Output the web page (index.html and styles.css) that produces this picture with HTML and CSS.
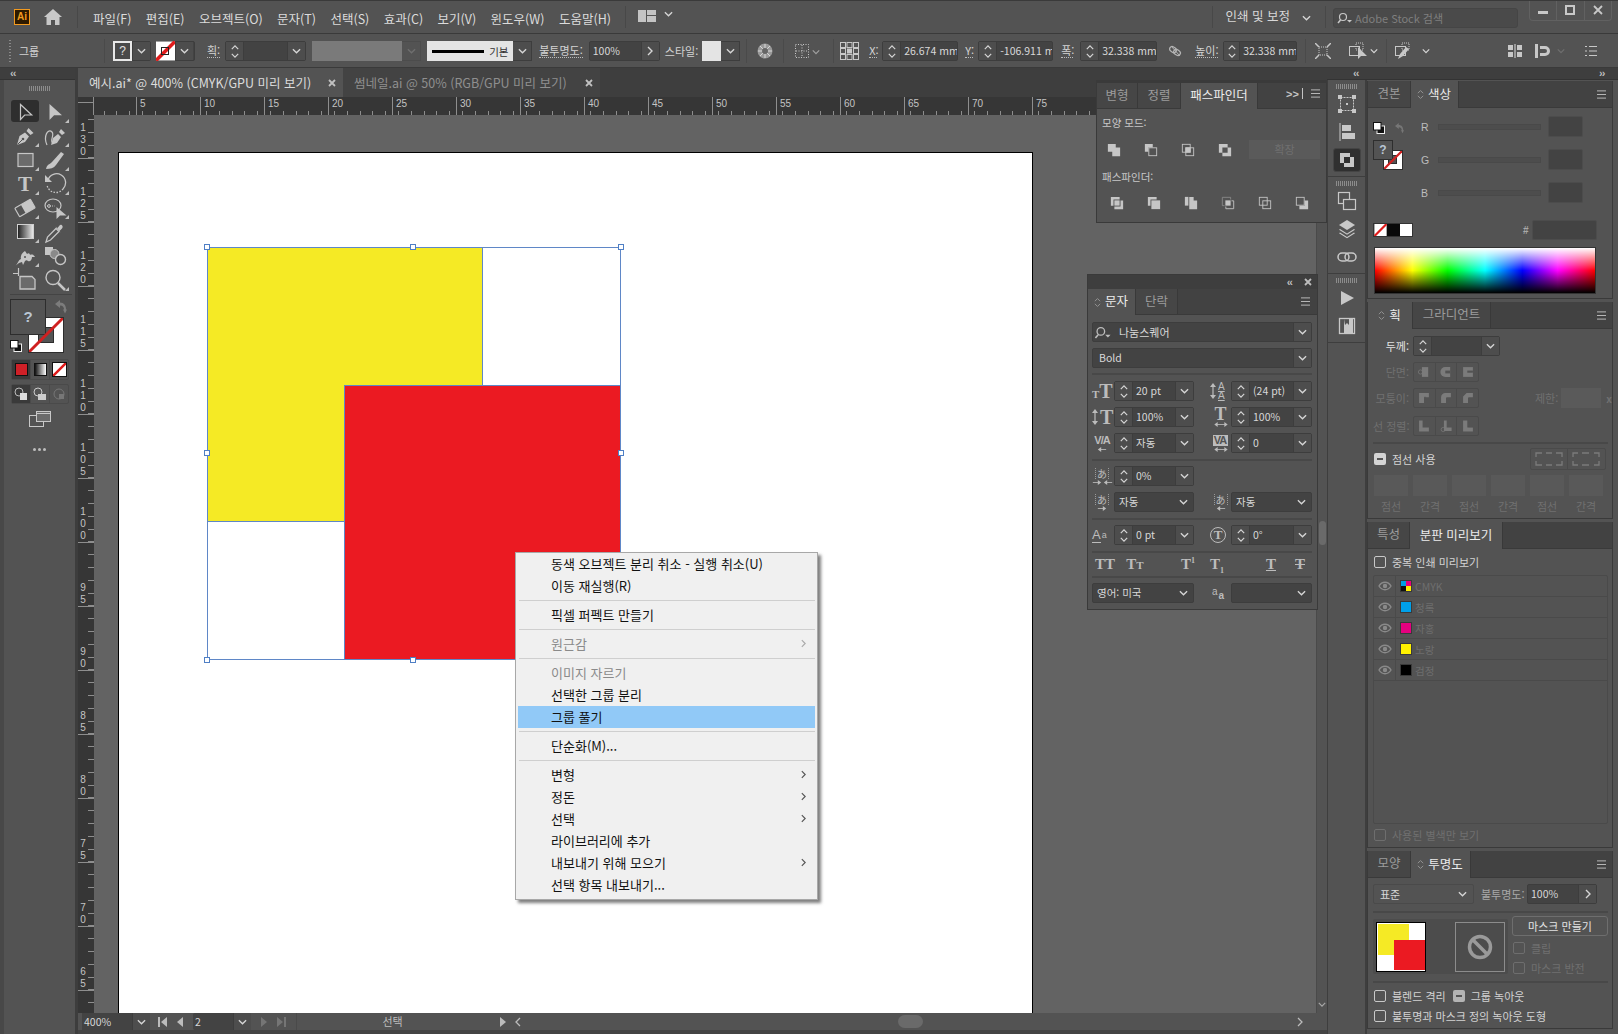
FILE: index.html
```html
<!DOCTYPE html>
<html lang="ko">
<head>
<meta charset="utf-8">
<title>Adobe Illustrator</title>
<link rel="stylesheet" href="styles.css">
</head>
<body>
<svg class="sprite" xmlns="http://www.w3.org/2000/svg">
  <defs>
    <linearGradient id="gr"><stop offset="0" stop-color="#1c1c1c"/><stop offset="1" stop-color="#eee"/></linearGradient>
    <symbol id="down" viewBox="0 0 10 6"><path d="M1 1l4 4 4-4" fill="none" stroke="currentColor" stroke-width="1.5"/></symbol>
    <symbol id="up" viewBox="0 0 10 6"><path d="M1 5l4-4 4 4" fill="none" stroke="currentColor" stroke-width="1.5"/></symbol>
    <symbol id="right" viewBox="0 0 6 10"><path d="M1 1l4 4-4 4" fill="none" stroke="currentColor" stroke-width="1.4"/></symbol>
    <symbol id="updown" viewBox="0 0 8 12"><path d="M1 4.500l3-3 3 3M1 7.500l3 3 3-3" fill="none" stroke="currentColor"/></symbol>
    <symbol id="menu" viewBox="0 0 12 10"><path d="M1 1h10M1 5h10M1 9h10" stroke="currentColor"/></symbol>
    <symbol id="lens" viewBox="0 0 16 12"><circle cx="6" cy="5" r="3.500" fill="none" stroke="currentColor" stroke-width="1.200"/><path d="M3.500 8L1 11" stroke="currentColor" stroke-width="1.500"/><path d="M10 8h5l-2.500 2.500z" fill="currentColor"/></symbol>
    <symbol id="none" viewBox="0 0 16 16"><rect width="16" height="16" fill="#fff"/><path d="M0 16L16 0" stroke="#e01b1b" stroke-width="3"/></symbol>
    <symbol id="eye" viewBox="0 0 14 10"><path d="M1 5c3-5 9-5 12 0-3 5-9 5-12 0z" fill="none" stroke="currentColor" stroke-width="1.400"/><circle cx="7" cy="5" r="2.200" fill="currentColor"/></symbol>
    <symbol id="arr-v" viewBox="0 0 6 16"><path d="M3 2v12" stroke="currentColor" stroke-width="1.200"/><path d="M3 0l3 4H0zM3 16l3-4H0z" fill="currentColor"/></symbol>
    <symbol id="arr-h" viewBox="0 0 16 6"><path d="M2 3h12" stroke="currentColor" stroke-width="1"/><path d="M0 3l4-3v6zM16 3l-4-3v6z" fill="currentColor"/></symbol>
    <symbol id="arr-l" viewBox="0 0 10 6"><path d="M2 3h8" stroke="currentColor"/><path d="M0 3l4-3v6z" fill="currentColor"/></symbol>
    <symbol id="arr-r" viewBox="0 0 10 6"><path d="M0 3h8" stroke="currentColor"/><path d="M10 3L6 0v6z" fill="currentColor"/></symbol>

    <symbol id="t-arrow" viewBox="0 0 24 24"><path d="M7.500 4.500v15l4.200-4.500h7z" fill="none" stroke="currentColor" stroke-width="1.200"/></symbol>
    <symbol id="t-darrow" viewBox="0 0 24 24"><path d="M6.500 4v16l4.600-4.700h7.900z" fill="currentColor"/></symbol>
    <symbol id="t-pen" viewBox="0 0 24 24"><path d="M4 21l2.500-9L12 8.500l4 4-4 5.500zM13.500 7l2-3 5 5-3 2z" fill="currentColor"/><path d="M4.500 20.500l5-5" stroke="#535353"/><circle cx="10" cy="15" r="1.300" fill="#535353"/></symbol>
    <symbol id="t-curve" viewBox="0 0 24 24"><path d="M4 21C0 12 5 4 9 8c3 3-3 9 1 11" fill="none" stroke="currentColor" stroke-width="1.200"/><path d="M8 21l2-7 5-4 3 3-4 6zM16 8l2-3 4 4-3 2z" fill="currentColor"/></symbol>
    <symbol id="t-rect" viewBox="0 0 24 24"><rect x="5" y="5.500" width="15" height="13" fill="#6b6b6b" stroke="currentColor" stroke-width="1.200"/></symbol>
    <symbol id="t-brush" viewBox="0 0 24 24"><path d="M3 21c1-5 3-4 6-7l9-10 3 2-8 11c-2 3-6 4-10 4z" fill="currentColor"/></symbol>
    <symbol id="t-rotate" viewBox="0 0 24 24"><path d="M5 8a9 9 0 1 1 15 9" fill="none" stroke="currentColor" stroke-width="1.300"/><path d="M20 17a9 9 0 0 1-16-4" fill="none" stroke="currentColor" stroke-width="1.300" stroke-dasharray="1.500 1.500"/><path d="M2 3v7h7z" fill="currentColor"/></symbol>
    <symbol id="t-eraser" viewBox="0 0 24 24"><g transform="rotate(-30 12 12)"><rect x="3" y="7" width="18" height="10" rx="1" fill="none" stroke="currentColor" stroke-width="1.200"/><rect x="10" y="7" width="11" height="10" rx="1" fill="currentColor"/></g></symbol>
    <symbol id="t-shape" viewBox="0 0 24 24"><ellipse cx="10" cy="9.500" rx="8" ry="6.500" fill="none" stroke="currentColor" stroke-width="1.200"/><path d="M4 10h8" stroke="currentColor" stroke-dasharray="1 1.500"/><circle cx="6" cy="10" r="1.400" fill="none" stroke="currentColor"/><path d="M13.500 11v12l3.500-3.500h6.500z" fill="currentColor"/></symbol>
    <symbol id="t-grad" viewBox="0 0 24 24"><rect x="4.500" y="4.500" width="16" height="14" fill="url(#gr)" stroke="#d0d0d0"/></symbol>
    <symbol id="t-drop" viewBox="0 0 24 24"><path d="M3 22l1.500-5L13 8.500l3 3L7.500 20z" fill="none" stroke="currentColor" stroke-width="1.300"/><path d="M12.500 6.500l2 1.500 2-2.500c1.500-2 4.500 1 2.500 3L16.500 11l1.500 2z" fill="currentColor"/></symbol>
    <symbol id="t-warp" viewBox="0 0 24 24"><path d="M2 22c3-2 3-6 6-7-1-3 1-6 4-8l2 3c2-2 3 0 3 1 2-1 4 0 5 2l-3 0c0 3-2 5-4 4-1-1-2-1-3 0l-2 4-1-3-3 1z" fill="currentColor"/><circle cx="12" cy="13" r="1" fill="#535353"/></symbol>
    <symbol id="t-blend" viewBox="0 0 24 24"><rect x="2" y="3" width="8" height="8" fill="currentColor"/><circle cx="11.500" cy="10" r="4.500" fill="#8a8a8a" stroke="currentColor"/><circle cx="17.500" cy="15.500" r="5" fill="#535353" stroke="currentColor" stroke-width="1.400"/></symbol>
    <symbol id="t-board" viewBox="0 0 24 24"><path d="M0 5.500h6M5.500 0v8" stroke="currentColor" stroke-width="1.200"/><path d="M7 8.500h12l3 3V21H7z" fill="#6b6b6b" stroke="currentColor" stroke-width="1.300"/></symbol>
    <symbol id="t-zoom" viewBox="0 0 24 24"><circle cx="10" cy="9.500" r="7" fill="none" stroke="currentColor" stroke-width="1.400"/><path d="M15 15l7 7" stroke="currentColor" stroke-width="2.500"/></symbol>

    <symbol id="pf-unite" viewBox="0 0 16 16"><path d="M1 1h9v4h5v10H6v-5H1z" fill="currentColor"/></symbol>
    <symbol id="pf-minus" viewBox="0 0 16 16"><path d="M1 1h9v4H5v5H1z" fill="currentColor"/><rect x="5.500" y="5.500" width="9" height="9" fill="none" stroke="currentColor"/></symbol>
    <symbol id="pf-inter" viewBox="0 0 16 16"><rect x="1.500" y="1.500" width="9" height="9" fill="none" stroke="currentColor"/><rect x="5.500" y="5.500" width="9" height="9" fill="none" stroke="currentColor"/><rect x="5" y="5" width="6" height="6" fill="currentColor"/></symbol>
    <symbol id="pf-excl" viewBox="0 0 16 16"><path d="M1 1h10v4H5v6H1zM11 5h4v10H5v-4h6z" fill="currentColor"/></symbol>
    <symbol id="pf-div" viewBox="0 0 16 16"><path d="M1 1h10v3H4v7H1z" fill="currentColor"/><rect x="5" y="5" width="6" height="6" fill="currentColor"/><path d="M12 5h3v10H5v-3h7z" fill="currentColor"/></symbol>
    <symbol id="pf-trim" viewBox="0 0 16 16"><path d="M1 1h10v3H4v7H1z" fill="currentColor"/><rect x="5" y="5" width="10" height="10" fill="currentColor"/></symbol>
    <symbol id="pf-merge" viewBox="0 0 16 16"><path d="M1 1h4v10H1z" fill="currentColor"/><path d="M6 1h5v4h4v10H6z" fill="currentColor"/></symbol>
    <symbol id="pf-crop" viewBox="0 0 16 16"><path d="M4 11H1.500V1.500H11V4" fill="none" stroke="#8c8c8c"/><path d="M12 5.500h2.500v9H5.500V12" fill="none" stroke="currentColor"/><rect x="5" y="5" width="6" height="6" fill="currentColor"/></symbol>
    <symbol id="pf-out" viewBox="0 0 16 16"><rect x="1.500" y="1.500" width="9" height="9" fill="none" stroke="currentColor"/><rect x="5.500" y="5.500" width="9" height="9" fill="none" stroke="currentColor"/></symbol>
    <symbol id="pf-back" viewBox="0 0 16 16"><path d="M11 5h4v10H5v-4h6z" fill="currentColor"/><rect x="1.500" y="1.500" width="9" height="9" fill="none" stroke="currentColor"/></symbol>

    <symbol id="d-transform" viewBox="0 0 20 20"><rect x="3.500" y="3.500" width="13" height="13" fill="none" stroke="currentColor" stroke-dasharray="2 1"/><rect x="1" y="1" width="4" height="4" fill="currentColor"/><rect x="15" y="1" width="4" height="4" fill="currentColor"/><rect x="1" y="15" width="4" height="4" fill="currentColor"/><rect x="15" y="15" width="4" height="4" fill="currentColor"/><rect x="9" y="9" width="2" height="2" fill="currentColor"/></symbol>
    <symbol id="d-align" viewBox="0 0 20 20"><path d="M3 1v18" stroke="currentColor"/><rect x="5" y="3" width="9" height="6" fill="currentColor"/><rect x="5" y="11" width="13" height="6" fill="currentColor"/></symbol>
    <symbol id="d-two" viewBox="0 0 20 20"><rect x="1.500" y="1.500" width="11" height="11" fill="none" stroke="currentColor" stroke-width="1.200"/><rect x="6.500" y="8.500" width="12" height="10" fill="#535353" stroke="currentColor" stroke-width="1.200"/></symbol>
    <symbol id="d-layers" viewBox="0 0 20 20"><path d="M10 1l8 5-8 5-8-5z" fill="currentColor"/><path d="M3 10l7 4.500L17 10l1 .800-8 5-8-5z" fill="currentColor"/><path d="M3 13.500l7 4.500 7-4.500 1 .800-8 5-8-5z" fill="currentColor"/></symbol>
    <symbol id="d-link" viewBox="0 0 20 12"><rect x="1" y="2" width="11" height="8" rx="4" fill="none" stroke="currentColor" stroke-width="1.500"/><rect x="8" y="2" width="11" height="8" rx="4" fill="none" stroke="currentColor" stroke-width="1.500"/></symbol>
    <symbol id="d-play" viewBox="0 0 20 20"><path d="M4 3l13 7-13 7z" fill="currentColor"/></symbol>
    <symbol id="d-book" viewBox="0 0 20 20"><rect x="2.500" y="2.500" width="15" height="15" fill="none" stroke="currentColor" stroke-width="1.300"/><path d="M7 3v14h9V3h-4v6l-2-2-2 2" fill="currentColor"/></symbol>

    <symbol id="c-cap1" viewBox="0 0 20 20"><circle cx="5" cy="10" r="3" fill="none" stroke="currentColor"/><rect x="7" y="3" width="9" height="14" fill="currentColor"/></symbol>
    <symbol id="c-cap2" viewBox="0 0 20 20"><path d="M16 3H9a7 7 0 0 0 0 14h7z" fill="currentColor"/><rect x="9" y="8" width="7" height="4" fill="#535353"/></symbol>
    <symbol id="c-cap3" viewBox="0 0 20 20"><rect x="3" y="3" width="14" height="14" fill="currentColor"/><rect x="9" y="8" width="8" height="3" fill="#535353"/></symbol>
    <symbol id="c-join1" viewBox="0 0 20 20"><path d="M3 3h14v6h-7v8H3z" fill="currentColor"/><path d="M10 9h3" stroke="#535353"/></symbol>
    <symbol id="c-join2" viewBox="0 0 20 20"><path d="M9 3h8v6h-6l-1 1v7H3V9a6 6 0 0 1 6-6z" fill="currentColor"/></symbol>
    <symbol id="c-join3" viewBox="0 0 20 20"><path d="M8 3h9v6h-6l-1 1v7H3V8z" fill="currentColor"/></symbol>
    <symbol id="c-al1" viewBox="0 0 20 20"><path d="M3 2h5v10h9v6H3z" fill="currentColor"/></symbol>
    <symbol id="c-al2" viewBox="0 0 20 20"><path d="M7 2h4v10h7v5H7z" fill="currentColor"/><circle cx="6" cy="15" r="3" fill="none" stroke="currentColor"/></symbol>
    <symbol id="c-al3" viewBox="0 0 20 20"><path d="M3 2h6v10h8v6H3z" fill="currentColor"/><path d="M11 5v6h6" fill="none" stroke="#535353"/></symbol>
    <symbol id="c-dash1" viewBox="0 0 28 14"><path d="M1 5V1h6M11 1h6M21 1h6v4M1 9v4h6M11 13h6M21 13h6V9" fill="none" stroke="currentColor" stroke-width="1.300"/></symbol>
    <symbol id="c-dash2" viewBox="0 0 28 14"><path d="M1 5V1h5M10 1h7M22 1h5v4M1 9v4h5M10 13h7M22 13h5V9" fill="none" stroke="currentColor" stroke-width="1.300"/></symbol>
  </defs>
</svg>

<div class="app">
  <header class="titlebar">
    <span class="ai-logo">Ai</span>
    <svg class="home" viewBox="0 0 18 16"><path d="M9 0l9 8h-2.500v8H11v-5H7v5H2.500V8H0z" fill="currentColor"/></svg>
    <span class="t-sep t-sep-1"></span>
    <nav class="menubar">
      <span>파일(F)</span><span>편집(E)</span><span>오브젝트(O)</span><span>문자(T)</span><span>선택(S)</span><span>효과(C)</span><span>보기(V)</span><span>윈도우(W)</span><span>도움말(H)</span>
    </nav>
    <span class="t-sep t-sep-2"></span>
    <svg class="layout-ic" viewBox="0 0 18 12"><path d="M0 0h8v12H0zM9 0h9v5H9zM9 6h9v6H9z" fill="currentColor"/></svg>
    <svg class="chev layout-ch"><use href="#down"/></svg>
    <span class="t-grow"></span>
    <span class="t-sep"></span>
    <span class="workspace-name">인쇄 및 보정</span>
    <svg class="chev ws-ch"><use href="#down"/></svg>
    <span class="t-sep ws-sep"></span>
    <div class="stock"><svg class="stock-ic"><use href="#lens"/></svg><span>Adobe Stock 검색</span></div>
    <div class="winbtns">
      <span class="win"><i class="win-min"></i></span>
      <span class="win"><i class="win-max"></i></span>
      <span class="win"><svg class="win-x" viewBox="0 0 10 10"><path d="M1 1l8 8M9 1l-8 8" stroke="currentColor" stroke-width="1.800"/></svg></span>
    </div>
  </header>

  <div class="controlbar">
    <span class="grip-v"></span>
    <span class="cb-txt cb-group">그룹</span>
    <span class="cb-sep cb-sep-0"></span>
    <div class="fld f-fill"><span class="q-swatch">?</span><span class="ch"><svg class="chev"><use href="#down"/></svg></span></div>
    <div class="fld f-stroke"><span class="n-swatch"><svg class="n-ic"><use href="#none"/></svg><i class="n-hole"></i></span><span class="ch"><svg class="chev"><use href="#down"/></svg></span></div>
    <span class="cb-lab l-stroke">획:</span>
    <div class="fld f-weight"><span class="st"><svg class="chev"><use href="#up"/></svg><svg class="chev"><use href="#down"/></svg></span><span class="in"></span><span class="ch"><svg class="chev"><use href="#down"/></svg></span></div>
    <div class="gray-block"></div><span class="gray-ch"><svg class="chev dim"><use href="#down"/></svg></span>
    <div class="stroke-def"><i class="stroke-line"></i><span>기본</span></div><span class="ch f-def-ch"><svg class="chev"><use href="#down"/></svg></span>
    <span class="cb-lab l-op">불투명도:</span>
    <div class="fld f-op"><span class="in">100%</span><span class="ch"><svg class="rchev"><use href="#right"/></svg></span></div>
    <span class="cb-lab-plain l-style">스타일:</span>
    <div class="style-sw"></div><span class="ch f-style-ch"><svg class="chev"><use href="#down"/></svg></span>
    <span class="cb-sep s-a"></span>
    <svg class="globe" viewBox="0 0 16 16"><circle cx="8" cy="8" r="7.500" fill="#9a9a9a"/><path d="M8 1v14M1 8h14M3 3l10 10M13 3L3 13" stroke="#d8d8d8"/><circle cx="8" cy="8" r="3" fill="#666"/></svg>
    <span class="cb-sep s-b"></span>
    <svg class="gridic" viewBox="0 0 14 14"><rect x=".5" y=".5" width="13" height="13" fill="none" stroke="currentColor" stroke-dasharray="1 1.500"/><path d="M7 1v12M1 7h12" stroke="currentColor" stroke-dasharray="1 1.500"/></svg>
    <svg class="chev grid-ch"><use href="#down"/></svg>
    <span class="cb-sep s-c"></span>
    <svg class="refic" viewBox="0 0 21 20"><g fill="none" stroke="currentColor"><rect x="1.500" y="1.500" width="5" height="5"/><rect x="8" y="1.500" width="5" height="5"/><rect x="14.500" y="1.500" width="5" height="5"/><rect x="1.500" y="7.500" width="5" height="5"/><rect x="14.500" y="7.500" width="5" height="5"/><rect x="1.500" y="13.500" width="5" height="5"/><rect x="8" y="13.500" width="5" height="5"/><rect x="14.500" y="13.500" width="5" height="5"/></g><rect x="8" y="7.500" width="5" height="5" fill="currentColor"/></svg>
    <span class="cb-lab l-x">X:</span>
    <div class="fld f-x"><span class="st"><svg class="chev"><use href="#up"/></svg><svg class="chev"><use href="#down"/></svg></span><span class="in">26.674 mm</span></div>
    <span class="cb-lab l-y">Y:</span>
    <div class="fld f-y"><span class="st"><svg class="chev"><use href="#up"/></svg><svg class="chev"><use href="#down"/></svg></span><span class="in">-106.911 mm</span></div>
    <span class="cb-lab l-w">폭:</span>
    <div class="fld f-w"><span class="st"><svg class="chev"><use href="#up"/></svg><svg class="chev"><use href="#down"/></svg></span><span class="in">32.338 mm</span></div>
    <svg class="linkic" viewBox="0 0 14 12"><g transform="rotate(35 7 6)"><rect x="1" y="3.500" width="7" height="5" rx="2.500" fill="none" stroke="currentColor" stroke-width="1.300"/><rect x="6" y="3.500" width="7" height="5" rx="2.500" fill="none" stroke="currentColor" stroke-width="1.300"/></g><path d="M3 1l9 10" stroke="currentColor"/></svg>
    <span class="cb-lab l-h">높이:</span>
    <div class="fld f-h"><span class="st st-16"><svg class="chev"><use href="#up"/></svg><svg class="chev"><use href="#down"/></svg></span><span class="in">32.338 mm</span></div>
    <span class="cb-sep s-d"></span>
    <svg class="act1" viewBox="0 0 16 16"><rect x="4" y="4" width="8" height="8" fill="none" stroke="currentColor" stroke-dasharray="1 1"/><path d="M0 0l4 4M16 0l-4 4M0 16l4-4M16 16l-4-4" stroke="currentColor" stroke-width="1.500"/></svg>
    <svg class="act2" viewBox="0 0 20 18"><rect x="1.500" y="4.500" width="10" height="9" fill="none" stroke="currentColor"/><rect x="8" y="1" width="7" height="7" fill="none" stroke="currentColor" stroke-dasharray="1 1"/><path d="M10 5v12l3-3h6z" fill="currentColor"/></svg>
    <svg class="chev act2-ch"><use href="#down"/></svg>
    <span class="cb-sep s-e"></span>
    <svg class="act3" viewBox="0 0 17 18"><rect x="1.500" y="4.500" width="10" height="9" fill="none" stroke="currentColor"/><rect x="8" y="1" width="7" height="7" fill="none" stroke="currentColor" stroke-dasharray="1 1"/><path d="M4 17l2-5 6-7 3 2-6 7z" fill="currentColor"/></svg>
    <svg class="chev act3-ch"><use href="#down"/></svg>
    <svg class="act4" viewBox="0 0 14 14"><path d="M6 0h2v14H6z" fill="currentColor" opacity=".6"/><path d="M0 1h5v5H0zM9 1h5v5H9zM0 8h5v5H0zM9 8h5v5H9z" fill="currentColor"/></svg>
    <svg class="act5" viewBox="0 0 15 14"><path d="M0 0h3v14H0z" fill="currentColor"/><path d="M5 2h5a4 4 0 0 1 0 10H5V9h5a1.500 1.500 0 0 0 0-4H5z" fill="currentColor"/></svg>
    <svg class="chev act5-ch dim"><use href="#down"/></svg>
    <svg class="act6" viewBox="0 0 12 12"><path d="M0 1.500h2M4 1.500h8M0 6h2M4 6h8M0 10.500h2M4 10.500h8" stroke="currentColor" stroke-width="1.200"/></svg>
  </div>

  <div class="workspace">
    <aside class="toolbox">
      <div class="dock-head"><span class="dbl">‹‹</span></div>
      <div class="tb-grip"></div>
      <div class="tools">
        <span class="tool active"><svg><use href="#t-arrow"/></svg></span>
        <span class="tool more"><svg><use href="#t-darrow"/></svg></span>
        <span class="tool more"><svg><use href="#t-pen"/></svg></span>
        <span class="tool more"><svg><use href="#t-curve"/></svg></span>
        <span class="tool more"><svg><use href="#t-rect"/></svg></span>
        <span class="tool more"><svg><use href="#t-brush"/></svg></span>
        <span class="tool more tool-t">T</span>
        <span class="tool more"><svg><use href="#t-rotate"/></svg></span>
        <span class="tool more"><svg><use href="#t-eraser"/></svg></span>
        <span class="tool more"><svg><use href="#t-shape"/></svg></span>
        <span class="tool more"><svg><use href="#t-grad"/></svg></span>
        <span class="tool"><svg><use href="#t-drop"/></svg></span>
        <span class="tool more"><svg><use href="#t-warp"/></svg></span>
        <span class="tool"><svg><use href="#t-blend"/></svg></span>
        <span class="tool"><svg><use href="#t-board"/></svg></span>
        <span class="tool more"><svg><use href="#t-zoom"/></svg></span>
      </div>
      <div class="tb-sep"></div>
      <div class="fs">
        <svg class="fs-undo" viewBox="0 0 12 16"><path d="M5 0L0 4l5 4V5.500c3 0 4 2 4 4l-1 0 2 4 2-4h-1c0-4-2-7-6-7z" fill="#7c7c7c"/></svg>
        <div class="fs-stroke"><svg class="fs-none" viewBox="0 0 35 35"><path d="M0 35L35 0" stroke="#d02020" stroke-width="3"/></svg><i class="fs-hole"></i></div>
        <div class="fs-fill">?</div>
        <svg class="fs-swap" viewBox="0 0 12 12"><rect x="4" y="4" width="7.500" height="7.500" fill="#111" stroke="#eee"/><rect x=".5" y=".5" width="7.500" height="7.500" fill="#fff" stroke="#111"/></svg>
      </div>
      <div class="seg seg-color">
        <span class="seg-cell on"><i class="sw-red"></i></span>
        <span class="seg-cell"><i class="sw-grad"></i></span>
        <span class="seg-cell"><svg class="sw-none"><use href="#none"/></svg></span>
      </div>
      <div class="seg seg-draw">
        <span class="seg-cell on"><svg class="draw-ic" viewBox="0 0 14 14"><circle cx="5" cy="5" r="4" fill="none" stroke="#bbb"/><rect x="6" y="6" width="7" height="7" fill="#ddd"/></svg></span>
        <span class="seg-cell"><svg class="draw-ic" viewBox="0 0 14 14"><circle cx="5" cy="5" r="4" fill="none" stroke="#ccc"/><rect x="5" y="7" width="8" height="6" fill="#ccc"/></svg></span>
        <span class="seg-cell"><svg class="draw-ic" viewBox="0 0 14 14"><circle cx="7" cy="7" r="5" fill="none" stroke="#777"/><path d="M7 7h5v5H7z" fill="#777"/></svg></span>
      </div>
      <svg class="screen-ic" viewBox="0 0 22 16"><rect x=".5" y="4.500" width="14" height="11" fill="none" stroke="#c8c8c8"/><rect x="7.500" y=".5" width="14" height="10" fill="#6a6a6a" stroke="#c8c8c8"/><path d="M8 2.500h13" stroke="#c8c8c8"/></svg>
      <div class="tb-dots"><i></i><i></i><i></i></div>
    </aside>

    <main class="docarea">
      <div class="doctabs">
        <div class="doctab on"><span class="dt-name">예시.ai* @ 400% (CMYK/GPU 미리 보기)</span><svg class="dt-x" viewBox="0 0 8 8"><path d="M1 1l6 6M7 1L1 7" stroke="currentColor" stroke-width="1.800"/></svg></div>
        <div class="doctab"><span class="dt-name">썸네일.ai @ 50% (RGB/GPU 미리 보기)</span><svg class="dt-x" viewBox="0 0 8 8"><path d="M1 1l6 6M7 1L1 7" stroke="currentColor" stroke-width="1.800"/></svg></div>
      </div>
      <div class="ruler-top">
        <span class="r-corner"></span>
        <span class="r-lead"></span>
        <span class="r-cell">5</span><span class="r-cell">10</span><span class="r-cell">15</span><span class="r-cell">20</span><span class="r-cell">25</span><span class="r-cell">30</span><span class="r-cell">35</span><span class="r-cell">40</span><span class="r-cell">45</span><span class="r-cell">50</span><span class="r-cell">55</span><span class="r-cell">60</span><span class="r-cell">65</span><span class="r-cell">70</span><span class="r-cell">75</span><span class="r-cell"></span><span class="r-cell"></span><span class="r-cell"></span>
      </div>
      <div class="doc-mid">
        <div class="ruler-left">
          <span class="rl-cell rl-first"><i>1</i><i>3</i><i>0</i></span>
          <span class="rl-cell"><i>1</i><i>2</i><i>5</i></span>
          <span class="rl-cell"><i>1</i><i>2</i><i>0</i></span>
          <span class="rl-cell"><i>1</i><i>1</i><i>5</i></span>
          <span class="rl-cell"><i>1</i><i>1</i><i>0</i></span>
          <span class="rl-cell"><i>1</i><i>0</i><i>5</i></span>
          <span class="rl-cell"><i>1</i><i>0</i><i>0</i></span>
          <span class="rl-cell"><i>9</i><i>5</i></span>
          <span class="rl-cell"><i>9</i><i>0</i></span>
          <span class="rl-cell"><i>8</i><i>5</i></span>
          <span class="rl-cell"><i>8</i><i>0</i></span>
          <span class="rl-cell"><i>7</i><i>5</i></span>
          <span class="rl-cell"><i>7</i><i>0</i></span>
          <span class="rl-cell"><i>6</i><i>5</i></span>
          <span class="rl-cell"></span>
        </div>
        <div class="canvas">
          <div class="artboard">
            <div class="shape yellow"></div>
            <div class="shape blank-tr"></div>
            <div class="shape blank-bl"></div>
            <div class="shape red"></div>
            <div class="selection"></div>
            <i class="h h1"></i><i class="h h2"></i><i class="h h3"></i><i class="h h4"></i><i class="h h5"></i><i class="h h6"></i><i class="h h7"></i><i class="h h8"></i>
          </div>
        </div>
        <div class="vscroll"><i class="v-thumb"></i><svg class="chev v-down"><use href="#down"/></svg></div>
      </div>
      <div class="status">
        <div class="fld s-zoom"><span class="in">400%</span><span class="ch"><svg class="chev"><use href="#down"/></svg></span></div>
        <svg class="nav n1" viewBox="0 0 9 10"><path d="M0 0h2v10H0zM9 0v10L3 5z" fill="currentColor"/></svg>
        <svg class="nav n2" viewBox="0 0 6 10"><path d="M6 0v10L0 5z" fill="currentColor"/></svg>
        <div class="fld s-page"><span class="in">2</span><span class="ch"><svg class="chev"><use href="#down"/></svg></span></div>
        <svg class="nav n3 dimmed" viewBox="0 0 6 10"><path d="M0 0v10l6-5z" fill="currentColor"/></svg>
        <svg class="nav n4 dimmed" viewBox="0 0 9 10"><path d="M0 0v10l6-5zM7 0h2v10H7z" fill="currentColor"/></svg>
        <div class="s-label">선택</div>
        <svg class="nav n5" viewBox="0 0 6 10"><path d="M0 0v10l6-5z" fill="currentColor"/></svg>
        <svg class="nav n6" viewBox="0 0 6 10"><path d="M5 1L1 5l4 4" fill="none" stroke="currentColor" stroke-width="1.300"/></svg>
        <div class="hscroll"><i class="h-thumb"></i></div>
        <svg class="nav n7" viewBox="0 0 6 10"><path d="M1 1l4 4-4 4" fill="none" stroke="currentColor" stroke-width="1.300"/></svg>
      </div>
    </main>

    <aside class="icondock">
      <div class="dock-head dh-icon"><span class="dbl">‹‹</span></div>
      <div class="dk-group g1">
        <div class="tb-grip dk-grip"></div>
        <span class="dk-ic"><svg><use href="#d-transform"/></svg></span>
        <span class="dk-ic"><svg><use href="#d-align"/></svg></span>
        <span class="dk-ic active"><svg class="dk-pf"><use href="#pf-excl"/></svg></span>
      </div>
      <div class="dk-group g2">
        <div class="tb-grip dk-grip"></div>
        <span class="dk-ic"><svg><use href="#d-two"/></svg></span>
        <span class="dk-ic"><svg><use href="#d-layers"/></svg></span>
        <span class="dk-ic"><svg><use href="#d-link"/></svg></span>
      </div>
      <div class="dk-group g3">
        <div class="tb-grip dk-grip"></div>
        <span class="dk-ic"><svg><use href="#d-play"/></svg></span>
        <span class="dk-ic"><svg><use href="#d-book"/></svg></span>
      </div>
    </aside>

    <aside class="paneldock">
      <div class="dock-head dh-right"><span class="dbl">››</span></div>

      <section class="panel p-color">
        <div class="tabs">
          <span class="tab w43">견본</span>
          <span class="tab on w48"><svg class="updn"><use href="#updown"/></svg>색상</span>
          <svg class="pmenu"><use href="#menu"/></svg>
        </div>
        <div class="color-top">
          <div class="mini">
            <svg class="mini-swap" viewBox="0 0 12 12"><rect x="4" y="4" width="7.500" height="7.500" fill="#111" stroke="#eee"/><rect x=".5" y=".5" width="7.500" height="7.500" fill="#fff" stroke="#111"/></svg>
            <svg class="mini-undo" viewBox="0 0 12 16"><path d="M5 0L0 4l5 4V5.500c3 0 4 2 4 4l-1 0 2 4 2-4h-1c0-4-2-7-6-7z" fill="#767676"/></svg>
            <div class="mini-stroke"><svg class="mini-none" viewBox="0 0 20 20"><path d="M0 20L20 0" stroke="#d02020" stroke-width="2.500"/></svg><i class="mini-hole"></i></div>
            <div class="mini-fill">?</div>
          </div>
          <div class="sliders">
            <div class="sl-row"><span class="sl-lab">R</span><i class="sl-track"></i><i class="sl-in"></i></div>
            <div class="sl-row"><span class="sl-lab">G</span><i class="sl-track"></i><i class="sl-in"></i></div>
            <div class="sl-row"><span class="sl-lab">B</span><i class="sl-track"></i><i class="sl-in"></i></div>
          </div>
        </div>
        <div class="swatch-row">
          <div class="swatches"><svg class="sw-a"><use href="#none"/></svg><i class="sw-b"></i><i class="sw-c"></i></div>
          <span class="hash">#</span>
          <i class="hex"></i>
        </div>
        <div class="spectrum"></div>
      </section>

      <section class="panel p-stroke">
        <div class="tabs">
          <span class="tab on w45"><svg class="updn"><use href="#updown"/></svg>획</span>
          <span class="tab w78">그라디언트</span>
          <svg class="pmenu"><use href="#menu"/></svg>
        </div>
        <div class="stroke-body">
          <div class="sr sr-first"><span class="sr-lab bright">두께:</span>
            <div class="fld f-th"><span class="st"><svg class="chev"><use href="#up"/></svg><svg class="chev"><use href="#down"/></svg></span><span class="in"></span><span class="ch"><svg class="chev"><use href="#down"/></svg></span></div>
          </div>
          <div class="sr"><span class="sr-lab">단면:</span>
            <div class="btn3"><span><svg><use href="#c-cap1"/></svg></span><span><svg><use href="#c-cap2"/></svg></span><span><svg><use href="#c-cap3"/></svg></span></div>
          </div>
          <div class="sr"><span class="sr-lab">모퉁이:</span>
            <div class="btn3"><span><svg><use href="#c-join1"/></svg></span><span><svg><use href="#c-join2"/></svg></span><span><svg><use href="#c-join3"/></svg></span></div>
            <span class="sr-limit">제한:</span><i class="limit-in"></i><span class="limit-x">x</span>
          </div>
          <div class="sr sr-align"><span class="sr-lab">선 정렬:</span>
            <div class="btn3"><span><svg><use href="#c-al1"/></svg></span><span><svg><use href="#c-al2"/></svg></span><span><svg><use href="#c-al3"/></svg></span></div>
          </div>
          <div class="psep sep-dash"></div>
          <div class="dash-row">
            <i class="cb-minus"></i><span class="chk-txt bright">점선 사용</span>
            <div class="dash-btns"><span><svg><use href="#c-dash1"/></svg></span><span><svg><use href="#c-dash2"/></svg></span></div>
          </div>
          <div class="dash-inputs"><i></i><i></i><i></i><i></i><i></i><i></i></div>
          <div class="dash-labels"><span>점선</span><span>간격</span><span>점선</span><span>간격</span><span>점선</span><span>간격</span></div>
        </div>
      </section>

      <section class="panel p-sep">
        <div class="tabs">
          <span class="tab w42">특성</span>
          <span class="tab on w93">분판 미리보기</span>
        </div>
        <label class="chk-row overprint"><i class="cb"></i><span class="chk-txt bright">중복 인쇄 미리보기</span></label>
        <div class="plates">
          <div class="plate"><span class="pl-eye"><svg><use href="#eye"/></svg></span><span class="pl-sw cmyk"></span><span class="pl-name">CMYK</span></div>
          <div class="plate"><span class="pl-eye"><svg><use href="#eye"/></svg></span><span class="pl-sw cyan"></span><span class="pl-name">청록</span></div>
          <div class="plate"><span class="pl-eye"><svg><use href="#eye"/></svg></span><span class="pl-sw mag"></span><span class="pl-name">자홍</span></div>
          <div class="plate"><span class="pl-eye"><svg><use href="#eye"/></svg></span><span class="pl-sw yel"></span><span class="pl-name">노랑</span></div>
          <div class="plate"><span class="pl-eye"><svg><use href="#eye"/></svg></span><span class="pl-sw blk"></span><span class="pl-name">검정</span></div>
        </div>
        <label class="chk-row spot"><i class="cb dimcb"></i><span class="chk-txt dimt">사용된 별색만 보기</span></label>
      </section>

      <section class="panel p-trans">
        <div class="tabs">
          <span class="tab w43">모양</span>
          <span class="tab on w60"><svg class="updn"><use href="#updown"/></svg>투명도</span>
          <svg class="pmenu"><use href="#menu"/></svg>
        </div>
        <div class="tr-top">
          <div class="fld f-blend"><span class="in">표준</span><svg class="chev"><use href="#down"/></svg></div>
          <span class="tr-op">불투명도:</span>
          <div class="fld f-trop"><span class="in">100%</span><span class="ch"><svg class="rchev"><use href="#right"/></svg></span></div>
        </div>
        <div class="psep sep-tr"></div>
        <div class="tr-mid">
          <div class="thumbs">
            <div class="thumb"><i class="th-y"></i><i class="th-r"></i></div>
            <div class="maskbox"><svg class="noic" viewBox="0 0 26 26"><circle cx="13" cy="13" r="10.500" fill="none" stroke="#9a9a9a" stroke-width="3.500"/><path d="M6 6l14 14" stroke="#9a9a9a" stroke-width="3.500"/></svg></div>
          </div>
          <div class="tr-side">
            <div class="mask-btn">마스크 만들기</div>
            <label class="chk-row clip"><i class="cb dimcb"></i><span class="chk-txt dimt">클립</span></label>
            <label class="chk-row inv"><i class="cb dimcb"></i><span class="chk-txt dimt">마스크 반전</span></label>
          </div>
        </div>
        <div class="psep sep-tr2"></div>
        <label class="chk-row blend-row"><i class="cb"></i><span class="chk-txt">블렌드 격리</span><i class="cb-minus cb-gray"></i><span class="chk-txt">그룹 녹아웃</span></label>
        <label class="chk-row ko-row"><i class="cb"></i><span class="chk-txt">불투명과 마스크 정의 녹아웃 도형</span></label>
      </section>
    </aside>
  </div>

  <section class="float f-path">
    <div class="tabs tabs-float">
      <span class="tab w41">변형</span>
      <span class="tab w43">정렬</span>
      <span class="tab on w77">패스파인더</span>
      <span class="float-over">&gt;&gt;</span><i class="float-bar"></i>
      <svg class="pmenu pm-path"><use href="#menu"/></svg>
    </div>
    <div class="pf-label pf-l1">모양 모드:</div>
    <div class="pf-row">
      <svg class="pf"><use href="#pf-unite"/></svg><svg class="pf"><use href="#pf-minus"/></svg><svg class="pf"><use href="#pf-inter"/></svg><svg class="pf"><use href="#pf-excl"/></svg>
      <span class="pf-expand">확장</span>
    </div>
    <div class="pf-label pf-l2">패스파인더:</div>
    <div class="pf-row2">
      <svg class="pf"><use href="#pf-div"/></svg><svg class="pf"><use href="#pf-trim"/></svg><svg class="pf"><use href="#pf-merge"/></svg><svg class="pf"><use href="#pf-crop"/></svg><svg class="pf"><use href="#pf-out"/></svg><svg class="pf"><use href="#pf-back"/></svg>
    </div>
  </section>

  <section class="float f-char">
    <div class="fc-head"><span class="dbl">‹‹</span><svg class="fc-x" viewBox="0 0 8 8"><path d="M1 1l6 6M7 1L1 7" stroke="currentColor" stroke-width="1.800"/></svg></div>
    <div class="tabs tabs-char">
      <span class="tab on w48"><svg class="updn"><use href="#updown"/></svg>문자</span>
      <span class="tab w42">단락</span>
      <svg class="pmenu pm-char"><use href="#menu"/></svg>
    </div>
    <div class="char-body">
      <div class="fld f-font"><svg class="lens"><use href="#lens"/></svg><span class="in font-name">나눔스퀘어</span><span class="ch"><svg class="chev"><use href="#down"/></svg></span></div>
      <div class="fld f-fontstyle"><span class="in font-style">Bold</span><span class="ch"><svg class="chev"><use href="#down"/></svg></span></div>
      <div class="psep first-sep"></div>
      <div class="char-row">
        <span class="ci"><b class="gl-s">T</b><b class="gl-b">T</b></span>
        <div class="fld"><span class="st"><svg class="chev"><use href="#up"/></svg><svg class="chev"><use href="#down"/></svg></span><span class="in">20 pt</span><span class="ch"><svg class="chev"><use href="#down"/></svg></span></div>
        <span class="ci ci-r"><svg class="a-v"><use href="#arr-v"/></svg><b class="gl-lead">A<br>A</b></span>
        <div class="fld"><span class="st"><svg class="chev"><use href="#up"/></svg><svg class="chev"><use href="#down"/></svg></span><span class="in">(24 pt)</span><span class="ch"><svg class="chev"><use href="#down"/></svg></span></div>
      </div>
      <div class="char-row">
        <span class="ci"><svg class="a-v"><use href="#arr-v"/></svg><b class="gl-b">T</b></span>
        <div class="fld"><span class="st"><svg class="chev"><use href="#up"/></svg><svg class="chev"><use href="#down"/></svg></span><span class="in">100%</span><span class="ch"><svg class="chev"><use href="#down"/></svg></span></div>
        <span class="ci ci-r ci-col"><b class="gl-hs">T</b><svg class="a-h"><use href="#arr-h"/></svg></span>
        <div class="fld"><span class="st"><svg class="chev"><use href="#up"/></svg><svg class="chev"><use href="#down"/></svg></span><span class="in">100%</span><span class="ch"><svg class="chev"><use href="#down"/></svg></span></div>
      </div>
      <div class="char-row">
        <span class="ci ci-col ci-col-l"><b class="gl-va">V/A</b><svg class="a-l"><use href="#arr-l"/></svg></span>
        <div class="fld"><span class="st"><svg class="chev"><use href="#up"/></svg><svg class="chev"><use href="#down"/></svg></span><span class="in">자동</span><span class="ch"><svg class="chev"><use href="#down"/></svg></span></div>
        <span class="ci ci-r ci-col"><b class="gl-vab">VA</b><svg class="a-h"><use href="#arr-h"/></svg></span>
        <div class="fld"><span class="st"><svg class="chev"><use href="#up"/></svg><svg class="chev"><use href="#down"/></svg></span><span class="in">0</span><span class="ch"><svg class="chev"><use href="#down"/></svg></span></div>
      </div>
      <div class="psep"></div>
      <div class="char-row">
        <span class="ci ci-col ci-col-l"><b class="gl-kana">あ</b><span class="a-pair"><svg class="a-l"><use href="#arr-r"/></svg><svg class="a-l"><use href="#arr-l"/></svg></span></span>
        <div class="fld"><span class="st"><svg class="chev"><use href="#up"/></svg><svg class="chev"><use href="#down"/></svg></span><span class="in">0%</span><span class="ch"><svg class="chev"><use href="#down"/></svg></span></div>
      </div>
      <div class="char-row">
        <span class="ci ci-col ci-col-l"><b class="gl-kana">あ</b><svg class="a-l"><use href="#arr-r"/></svg></span>
        <div class="fld fld-sel"><span class="in">자동</span><svg class="chev"><use href="#down"/></svg></div>
        <span class="ci ci-r ci-col"><b class="gl-kana">あ</b><svg class="a-l"><use href="#arr-l"/></svg></span>
        <div class="fld fld-sel"><span class="in">자동</span><svg class="chev"><use href="#down"/></svg></div>
      </div>
      <div class="psep"></div>
      <div class="char-row">
        <span class="ci"><b class="gl-a">A</b><small class="gl-aa">a</small></span>
        <div class="fld"><span class="st"><svg class="chev"><use href="#up"/></svg><svg class="chev"><use href="#down"/></svg></span><span class="in">0 pt</span><span class="ch"><svg class="chev"><use href="#down"/></svg></span></div>
        <span class="ci ci-r"><b class="gl-rot">T</b></span>
        <div class="fld"><span class="st"><svg class="chev"><use href="#up"/></svg><svg class="chev"><use href="#down"/></svg></span><span class="in">0°</span><span class="ch"><svg class="chev"><use href="#down"/></svg></span></div>
      </div>
      <div class="psep"></div>
      <div class="tt-row">
        <span class="tt t1">TT</span><span class="tt t2">T<small>T</small></span><span class="tt t3">T<sup>1</sup></span><span class="tt t4">T<sub>1</sub></span><span class="tt t5">T</span><span class="tt t6">T</span>
      </div>
      <div class="psep"></div>
      <div class="char-row">
        <div class="fld fld-sel lang"><span class="in">영어: 미국</span><svg class="chev"><use href="#down"/></svg></div>
        <span class="ci ci-r aa"><small>a</small><b>a</b></span>
        <div class="fld fld-sel"><span class="in"></span><svg class="chev"><use href="#down"/></svg></div>
      </div>
    </div>
  </section>

  <div class="ctx">
    <div class="mi">동색 오브젝트 분리 취소 - 실행 취소(U)</div>
    <div class="mi">이동 재실행(R)</div>
    <div class="ms"></div>
    <div class="mi">픽셀 퍼펙트 만들기</div>
    <div class="ms"></div>
    <div class="mi off">원근감<svg class="mar"><use href="#right"/></svg></div>
    <div class="ms"></div>
    <div class="mi off">이미지 자르기</div>
    <div class="mi">선택한 그룹 분리</div>
    <div class="mi hot">그룹 풀기</div>
    <div class="ms"></div>
    <div class="mi">단순화(M)...</div>
    <div class="ms"></div>
    <div class="mi">변형<svg class="mar"><use href="#right"/></svg></div>
    <div class="mi">정돈<svg class="mar"><use href="#right"/></svg></div>
    <div class="mi">선택<svg class="mar"><use href="#right"/></svg></div>
    <div class="mi">라이브러리에 추가</div>
    <div class="mi">내보내기 위해 모으기<svg class="mar"><use href="#right"/></svg></div>
    <div class="mi">선택 항목 내보내기...</div>
  </div>
</div>
</body>
</html>
```
FILE: styles.css
```css
* { box-sizing: border-box; }
html, body { margin: 0; height: 100%; }
body { background: #535353; overflow: hidden; font-family: "Noto Sans CJK KR", "Noto Sans", sans-serif; color: #d4d4d4; }
svg { display: block; flex: none; }
i { display: block; font-style: normal; }
.sprite { position: absolute; width: 0; height: 0; }
.app { position: relative; width: 1618px; height: 1034px; background: #535353; overflow: hidden; display: flex; flex-direction: column; }

/* Title bar */
.titlebar { height: 34px; flex: none; display: flex; align-items: center; border-top: 1px solid #3a3a3a; border-bottom: 1px solid #3a3a3a; }
.ai-logo { margin-left: 14px; width: 16px; height: 16px; background: #2e1a00; border: 1px solid #f29a1f; color: #f29a1f; font: 700 10px/14px "Liberation Sans", sans-serif; text-align: center; flex: none; }
.home { width: 18px; height: 16px; margin-left: 14px; color: #c8c8c8; }
.t-sep { width: 1px; height: 22px; background: #484848; flex: none; }
.t-sep-1 { margin-left: 15px; }
.t-sep-2 { margin-left: 14px; }
.menubar { display: flex; gap: 14.400px; margin-left: 15px; font-size: 12.500px; color: #dcdcdc; padding-top: 2px; white-space: nowrap; }
.layout-ic { width: 18px; height: 12px; margin-left: 12px; color: #c4c4c4; margin-top: -2px; }
.chev { width: 9px; height: 6px; color: #d6d6d6; }
.chev.dim { color: #6f6f6f; }
.rchev { width: 6px; height: 10px; color: #d6d6d6; }
.layout-ch { margin-left: 8px; margin-top: -6px; }
.t-grow { flex: 1; }
.workspace-name { font-size: 12.500px; margin-left: 12px; color: #d8d8d8; margin-top: -3px; white-space: nowrap; }
.ws-ch { margin-left: 12px; margin-top: 2px; }
.ws-sep { margin-left: 14px; }
.stock { margin-left: 7px; width: 185px; height: 20px; margin-top: 2px; background: #4a4a4a; border: 1px solid #454545; border-radius: 3px; display: flex; align-items: center; font-size: 11px; color: #7f7f7f; }
.stock-ic { width: 16px; height: 12px; margin: 0 2px 0 3px; color: #c8c8c8; }
.winbtns { margin: -13px 6px 0 11px; width: 83px; height: 20px; display: flex; border: 1px solid #616161; border-top: 0; border-radius: 0 0 4px 4px; }
.win { flex: 1; display: flex; align-items: center; justify-content: center; border-right: 1px solid #616161; color: #c8c8c8; }
.win:last-child { border: 0; }
.win-min { width: 10px; height: 3px; background: #c8c8c8; margin-top: 5px; }
.win-max { width: 10px; height: 10px; border: 2px solid #c8c8c8; }
.win-x { width: 10px; height: 10px; }

/* Control bar */
.controlbar { height: 34px; flex: none; display: flex; align-items: center; border-bottom: 1px solid #3a3a3a; padding-top: 1px; font-size: 11px; white-space: nowrap; }
.grip-v { width: 2px; height: 22px; margin-left: 9px; background: repeating-linear-gradient(to bottom, #8a8a8a 0 1px, transparent 1px 3px); }
.cb-txt { color: #d4d4d4; }
.cb-group { margin-left: 8px; width: 20px; }
.cb-sep { width: 1px; height: 24px; background: #4a4a4a; flex: none; }
.cb-sep-0 { margin-left: 65px; }
.fld { display: flex; height: 20px; flex: none; align-items: stretch; background: #434343; border: 1px solid #3d3d3d; border-radius: 2px; font-size: 10.500px; color: #d8d8d8; }
.st { width: 18px; flex: none; background: #4d4d4d; border-right: 1px solid #3d3d3d; display: flex; flex-direction: column; align-items: center; justify-content: center; gap: 3px; }
.st-16 { width: 16px; }
.st .chev { width: 8px; height: 5px; }
.in { flex: 1; min-width: 0; padding-left: 3px; line-height: 18px; overflow: hidden; white-space: nowrap; }
.ch { width: 18px; flex: none; display: flex; align-items: center; justify-content: center; background: #4d4d4d; border-left: 1px solid #3d3d3d; }
.f-fill { margin-left: 8px; width: 38px; }
.q-swatch { width: 19px; margin: -1px 0 -1px -1px; background: #4a4a4a; border: 2px solid #e8e8e8; color: #e0e0e0; font: 12px/16px "Liberation Sans", sans-serif; text-align: center; flex: none; }
.f-stroke { margin-left: 5px; width: 39px; }
.n-swatch { position: relative; width: 19px; flex: none; margin: -1px 0 -1px -1px; }
.n-ic { width: 19px; height: 20px; }
.n-hole { position: absolute; left: 5px; top: 6px; width: 8px; height: 8px; border: 1px solid #222; }
.l-stroke { margin-left: 12px; }
.cb-lab { border-bottom: 1px dotted #bbb; line-height: 13px; color: #d4d4d4; }
.cb-lab-plain { color: #d4d4d4; }
.f-weight { margin-left: 5px; width: 81px; }
.gray-block { margin-left: 6px; width: 90px; height: 20px; background: #7a7a7a; flex: none; }
.gray-ch { width: 19px; height: 20px; display: flex; align-items: center; justify-content: center; border: 1px solid #4c4c4c; border-left: 0; flex: none; }
.stroke-def { margin-left: 6px; width: 86px; height: 20px; background: #e4e4e4; color: #333; display: flex; align-items: center; padding-left: 5px; gap: 5px; font-size: 10.500px; flex: none; }
.stroke-line { width: 52px; height: 3px; background: #000; flex: none; }
.f-def-ch { height: 20px; width: 19px; border: 1px solid #3d3d3d; border-left: 0; }
.l-op { margin-left: 7px; }
.f-op { margin-left: 6px; width: 71px; }
.l-style { margin-left: 5px; }
.style-sw { margin-left: 4px; width: 19px; height: 20px; background: #e4e4e4; flex: none; }
.f-style-ch { height: 20px; width: 19px; border: 1px solid #3d3d3d; border-left: 0; }
.s-a { margin-left: 6px; }
.globe { width: 16px; height: 16px; margin-left: 10px; }
.s-b { margin-left: 10px; }
.gridic { width: 14px; height: 14px; margin-left: 11px; color: #c8c8c8; }
.grid-ch { margin-left: 3px; width: 8px; margin-top: 2px; color: #a0a0a0; }
.s-c { margin-left: 13px; }
.refic { width: 21px; height: 20px; margin-left: 5px; color: #c8c8c8; }
.l-x { margin-left: 9px; width: 8px; }
.f-x { margin-left: 5px; width: 76px; }
.l-y { margin-left: 7px; width: 8px; }
.f-y { margin-left: 5px; width: 75px; }
.l-w { margin-left: 8px; width: 12px; }
.f-w { margin-left: 7px; width: 77px; }
.linkic { width: 14px; height: 12px; margin-left: 11px; color: #b4b4b4; }
.l-h { margin-left: 13px; width: 23px; }
.f-h { margin-left: 5px; width: 74px; }
.s-d { margin-left: 8px; }
.act1 { width: 16px; height: 16px; margin-left: 9px; color: #c8c8c8; }
.act2 { width: 20px; height: 18px; margin-left: 17px; color: #c8c8c8; }
.act2-ch { margin-left: 2px; width: 8px; }
.s-e { margin-left: 8px; }
.act3 { width: 17px; height: 18px; margin-left: 7px; color: #c8c8c8; }
.act3-ch { margin-left: 11px; width: 8px; }
.act4 { width: 14px; height: 14px; margin-left: 78px; color: #c8c8c8; }
.act5 { width: 15px; height: 14px; margin-left: 13px; color: #c8c8c8; }
.act5-ch { margin-left: 7px; width: 8px; }
.act6 { width: 12px; height: 12px; margin-left: 20px; color: #c8c8c8; }

/* Workspace */
.workspace { flex: 1; min-height: 0; display: flex; }
.dock-head { height: 12px; background: #3e3e3e; border-bottom: 1px solid #333; color: #bdbdbd; position: relative; }
.dbl { font: 700 11px/11px "Liberation Sans", sans-serif; display: block; letter-spacing: -1px; }

/* Toolbox */
.toolbox { width: 78px; flex: none; border-right: 3px solid #3d3d3d; border-left: 4px solid #484848; position: relative; }
.toolbox .dock-head { padding-left: 10px; margin-left: -4px; }
.tb-grip { height: 5px; width: 21px; margin: 6px 0 0 25px; background: repeating-linear-gradient(to right, #8c8c8c 0 1px, transparent 1px 2px); }
.tools { display: grid; grid-template-columns: 30px 30px; grid-auto-rows: 24px; margin: 9px 0 0 6px; }
.tool { position: relative; display: flex; align-items: center; justify-content: center; color: #c6c6c6; }
.tool svg { width: 24px; height: 24px; }
.tool.active { margin: 0 1px 2px 1px; background: #2e2e2e; border-radius: 3px; }
.tool.active svg { margin-top: 2px; }
.tool.more::after { content: ""; position: absolute; right: 1px; bottom: 1px; border-left: 4px solid transparent; border-bottom: 4px solid #c0c0c0; }
.tool-t { font: 700 21px/24px "Liberation Serif", serif; }
.tb-sep { height: 1px; background: #444; margin: 2px 3px 0 6px; }
.fs { position: relative; height: 59px; margin-top: 4px; }
.fs-fill { position: absolute; left: 6px; top: 0; width: 36px; height: 36px; background: #535353; border: 1px solid #2d2d2d; color: #b9c6d4; font: 700 15px/34px "Liberation Sans", sans-serif; text-align: center; }
.fs-stroke { position: absolute; left: 24px; top: 18px; width: 36px; height: 36px; background: #fff; border: 1px solid #2d2d2d; }
.fs-hole { position: absolute; left: 9px; top: 9px; width: 16px; height: 16px; background: #535353; border: 1px solid #2d2d2d; }
.fs-none { position: absolute; left: 0; top: 0; width: 34px; height: 34px; z-index: 1; }
.fs-swap { position: absolute; left: 6px; top: 41px; width: 12px; height: 12px; }
.fs-undo { position: absolute; left: 51px; top: 1px; width: 12px; height: 16px; }
.seg { display: flex; width: 58px; height: 20px; margin-left: 7px; border: 1px solid #4a4a4a; border-radius: 2px; }
.seg-color { margin-top: 1px; height: 21px; }
.seg-draw { margin-top: 4px; }
.seg-cell { flex: 1; display: flex; align-items: center; justify-content: center; border-right: 1px solid #4a4a4a; }
.seg-cell:last-child { border: 0; }
.seg-cell.on { background: #3a3a3a; }
.sw-red { width: 13px; height: 13px; background: #cf2027; border: 1px solid #111; }
.sw-grad { width: 13px; height: 13px; background: linear-gradient(to right, #111, #fff); border: 1px solid #111; }
.sw-none { width: 13px; height: 13px; outline: 1px solid #111; }
.draw-ic { width: 14px; height: 14px; }
.screen-ic { width: 22px; height: 16px; margin: 7px 0 0 25px; }
.tb-dots { display: flex; gap: 2px; margin: 21px 0 0 29px; }
.tb-dots i { width: 3px; height: 3px; background: #bdbdbd; border-radius: 50%; }

/* Document */
.docarea { width: 1249px; flex: none; display: flex; flex-direction: column; }
.doctabs { height: 29px; flex: none; background: #3e3e3e; display: flex; }
.doctab { display: flex; align-items: center; justify-content: space-between; background: #434343; color: #8f8f8f; font-size: 12.500px; white-space: nowrap; }
.doctab:first-child { width: 265px; background: #535353; color: #dcdcdc; padding: 0 7px 0 11px; }
.doctab:nth-child(2) { width: 257px; padding: 0 7px 0 11px; }
.dt-x { width: 8px; height: 8px; color: #c0c0c0; }
.ruler-top { height: 18px; flex: none; display: flex; background-color: #363636; background-image: repeating-linear-gradient(to right, #8e8e8e 0 1px, transparent 1px 12.800px); background-size: 100% 4px; background-position: 0 100%; background-repeat: no-repeat; color: #c4c4c4; font: 10px/14px "Liberation Sans", sans-serif; overflow: hidden; }
.r-corner { width: 16px; flex: none; border-right: 1px solid #8e8e8e; background: linear-gradient(#8e8e8e, #8e8e8e) 0 5px / 100% 1px no-repeat, #363636; }
.r-lead { width: 42px; flex: none; }
.r-cell { width: 64px; flex: none; padding-left: 3px; border-left: 1px solid #8e8e8e; }
.doc-mid { flex: 1; min-height: 0; display: flex; }
.ruler-left { width: 16px; flex: none; background-color: #363636; background-image: repeating-linear-gradient(to bottom, #8e8e8e 0 1px, transparent 1px 12.800px); background-size: 6px 100%; background-position: 100% 4px; background-repeat: no-repeat; overflow: hidden; color: #c4c4c4; font: 10px/12px "Liberation Sans", sans-serif; }
.rl-cell { height: 64px; display: flex; flex-direction: column; justify-content: flex-end; border-bottom: 1px solid #8e8e8e; padding: 0 0 0 1px; }
.rl-first { height: 44px; }
.rl-cell i { width: 8px; text-align: center; }
.canvas { flex: 1; min-width: 0; position: relative; overflow: hidden; background: #636363; }
.artboard { position: absolute; left: 24px; top: 37px; width: 915px; height: 900px; background: #fff; border: 1px solid #000; }
.shape { position: absolute; border: 1px solid #5f87c7; }
.yellow { left: 88px; top: 94px; width: 275px; height: 275px; background: #f5ea25; border: 0; }
.red { left: 225px; top: 232px; width: 277px; height: 275px; background: #eb1a22; }
.blank-tr { left: 363px; top: 94px; width: 139px; height: 139px; background: #fff; }
.blank-bl { left: 88px; top: 368px; width: 138px; height: 139px; background: #fff; }
.selection { position: absolute; left: 88px; top: 94px; width: 414px; height: 413px; border: 1px solid #5f87c7; }
.h { position: absolute; width: 6px; height: 6px; background: #fff; border: 1px solid #4f7fc5; }
.h1 { left: 85px; top: 91px; } .h2 { left: 291px; top: 91px; } .h3 { left: 499px; top: 91px; }
.h4 { left: 85px; top: 297px; } .h5 { left: 499px; top: 297px; }
.h6 { left: 85px; top: 504px; } .h7 { left: 291px; top: 504px; } .h8 { left: 499px; top: 504px; }
.vscroll { width: 11px; flex: none; background: #535353; border-left: 1px solid #4a4a4a; position: relative; }
.v-thumb { position: absolute; left: 2px; top: 406px; width: 7px; height: 24px; background: #6a6a6a; border-radius: 4px; }
.v-down { position: absolute; left: 1px; bottom: 6px; width: 8px; height: 5px; color: #a8a8a8; }

.status { height: 21px; flex: none; display: flex; align-items: flex-start; padding-left: 4px; border-bottom: 4px solid #444; background: #535353; }
.s-zoom { width: 68px; height: 17px; border: 0; border-radius: 0; }
.s-zoom .in, .s-page .in { font-size: 10.500px; line-height: 17px; padding-left: 2px; }
.s-page { width: 58px; height: 17px; margin-left: 10px; border: 0; }
.nav { height: 10px; margin-top: 4px; color: #bcbcbc; }
.n1 { width: 9px; margin-left: 8px; }
.n2 { width: 6px; margin-left: 10px; }
.n3 { width: 6px; margin-left: 10px; }
.n4 { width: 9px; margin-left: 10px; }
.dimmed { color: #757575; }
.s-label { width: 192px; margin-left: 10px; text-align: center; font-size: 11px; line-height: 17px; color: #bdbdbd; border-left: 1px solid #4a4a4a; }
.n5 { width: 6px; margin-left: 12px; }
.n6 { width: 6px; margin-left: 9px; }
.hscroll { flex: 1; height: 17px; position: relative; }
.h-thumb { position: absolute; left: 377px; top: 2px; width: 25px; height: 13px; border-radius: 7px; background: #6a6a6a; }
.n7 { width: 6px; margin-right: 24px; }

/* Icon dock */
.icondock { width: 40px; flex: none; border-right: 2px solid #3e3e3e; border-left: 1px solid #3e3e3e; }
.dh-icon { padding-left: 26px; margin-left: -1px; margin-right: -2px; }
.dk-group { border-bottom: 1px solid #3e3e3e; display: flex; flex-direction: column; align-items: center; }
.g1 { height: 97px; }
.g2 { height: 97px; }
.g3 { height: 69px; }
.dk-grip { margin: 4px 0 0; }
.dk-ic { width: 28px; height: 24px; margin-top: 4px; display: flex; align-items: center; justify-content: center; color: #c8c8c8; }
.dk-ic svg { width: 20px; height: 20px; }
.dk-ic:nth-child(2) { margin-top: 3px; }
.dk-ic svg.dk-pf { width: 16px; height: 16px; }
.dk-ic.active { background: #303030; border-radius: 3px; border: 1px solid #444; margin-top: 4px; }

/* Panel dock */
.paneldock { width: 251px; flex: none; padding-right: 5px; position: relative; }
.dh-right { padding-left: 232px; margin-right: -5px; margin-bottom: 1px; }
.panel { border-left: 1px solid #3a3a3a; border-right: 1px solid #3a3a3a; border-bottom: 1px solid #3a3a3a; }
.p-color { height: 218px; margin-bottom: 3px; }
.p-stroke { height: 217px; margin-bottom: 3px; }
.p-sep { height: 326px; margin-bottom: 3px; }
.p-trans { height: 178px; }
.tabs { height: 27px; display: flex; align-items: stretch; background: #424242; border-bottom: 1px solid #3a3a3a; font-size: 12.500px; color: #9c9c9c; position: relative; }
.tab { display: flex; align-items: center; justify-content: center; border-right: 1px solid #393939; flex: none; background: #464646; white-space: nowrap; padding-bottom: 3px; }
.tab.on { background: #535353; color: #ececec; margin-bottom: -1px; position: relative; }
.w41 { width: 41px; } .w42 { width: 42px; } .w43 { width: 43px; } .w45 { width: 45px; } .w48 { width: 48px; } .w60 { width: 60px; } .w77 { width: 77px; } .w78 { width: 78px; } .w93 { width: 93px; }
.updn { width: 7px; height: 11px; margin: 3px 4px 0 -1px; color: #9a9a9a; }
.pmenu { width: 11px; height: 9px; position: absolute; right: 5px; top: 9px; color: #c4c4c4; }

/* Colour */
.color-top { display: flex; padding: 8px 0 0 5px; }
.mini { position: relative; width: 40px; height: 60px; flex: none; }
.mini-swap { position: absolute; left: 0; top: 6px; width: 12px; height: 12px; }
.mini-undo { position: absolute; left: 21px; top: 7px; width: 11px; height: 12px; }
.mini-fill { position: absolute; left: 0; top: 24px; width: 20px; height: 20px; background: #535353; border: 1px solid #2e2e2e; color: #b9c6d4; font: 700 12px/18px "Liberation Sans", sans-serif; text-align: center; }
.mini-stroke { position: absolute; left: 10px; top: 34px; width: 20px; height: 20px; background: #fff; border: 1px solid #2e2e2e; }
.mini-none { position: absolute; width: 18px; height: 18px; left: 0; top: 0; z-index: 1; }
.mini-hole { position: absolute; left: 4px; top: 4px; width: 9px; height: 9px; background: #535353; border: 1px solid #2e2e2e; }
.sliders { display: flex; flex-direction: column; gap: 12px; margin-left: 8px; }
.sl-row { display: flex; align-items: center; height: 21px; font: 10.500px "Liberation Sans", sans-serif; color: #bdbdbd; }
.sl-lab { width: 17px; }
.sl-track { width: 103px; height: 6px; background: #4d4d4d; border: 1px solid #494949; }
.sl-in { width: 35px; height: 21px; margin-left: 7px; background: #434343; border: 1px solid #4c4c4c; border-radius: 2px; }
.swatch-row { display: flex; align-items: center; margin: 17px 0 0 5px; }
.swatches { display: flex; width: 40px; height: 14px; border: 1px solid #333; flex: none; }
.sw-a { width: 13px; height: 12px; }
.sw-b { width: 13px; height: 12px; background: #0a0a0a; }
.sw-c { width: 12px; height: 12px; background: #fff; }
.hash { margin-left: 110px; width: 9px; font: 700 10px "Liberation Sans", sans-serif; color: #a8a8a8; }
.hex { width: 65px; height: 20px; background: #434343; border: 1px solid #4c4c4c; border-radius: 2px; }
.spectrum { width: 222px; height: 47px; margin: 7px 0 0 6px; border: 1px solid #333; background: linear-gradient(to bottom, #fff 0%, rgba(255,255,255,0) 50%, rgba(0,0,0,0) 50%, #000 100%), linear-gradient(to right, #f00, #ff0 17%, #0f0 33%, #0ff 50%, #00f 67%, #f0f 83%, #f00); }

/* Stroke */
.stroke-body { padding: 7px 0 0 5px; font-size: 11px; color: #707070; }
.sr { display: flex; align-items: center; height: 20px; margin-top: 6px; }
.sr-first { margin-top: 0; }
.sr-align { margin-top: 8px; }
.sr-lab { width: 36px; margin-right: 4px; text-align: right; white-space: nowrap; flex: none; }
.bright { color: #e2e2e2; }
.f-th { width: 87px; }
.btn3 { display: flex; width: 66px; height: 20px; border: 1px solid #4a4a4a; border-radius: 2px; }
.btn3 span { flex: 1; display: flex; align-items: center; justify-content: center; border-right: 1px solid #4a4a4a; color: #7b7b7b; }
.btn3 span:last-child { border: 0; }
.btn3 svg { width: 14px; height: 14px; }
.sr-limit { margin-left: 56px; white-space: nowrap; }
.limit-in { width: 40px; height: 20px; margin-left: 3px; background: #5a5a5a; }
.limit-x { margin-left: 5px; font-weight: 700; font-size: 10px; }
.psep { height: 2px; background: #484848; margin: 5px 0 6px; }
.sep-dash { margin: 6px 4px 4px 0; }
.dash-row { display: flex; align-items: center; height: 22px; padding-left: 1px; }
.cb-minus { width: 12px; height: 12px; flex: none; background: #d4d4d4; border-radius: 2px; position: relative; }
.cb-minus::after { content: ""; position: absolute; left: 3px; top: 5px; width: 6px; height: 2px; background: #555; }
.chk-txt { margin-left: 6px; font-size: 11px; line-height: 12px; white-space: nowrap; color: #d4d4d4; }
.dash-btns { display: flex; margin-left: 94px; width: 76px; height: 22px; border: 1px solid #4a4a4a; border-radius: 2px; }
.dash-btns span { flex: 1; display: flex; align-items: center; justify-content: center; border-right: 1px solid #4a4a4a; color: #7b7b7b; }
.dash-btns span:last-child { border: 0; }
.dash-btns svg { width: 28px; height: 14px; }
.dash-inputs { display: grid; grid-template-columns: repeat(6, 34px); column-gap: 5px; margin: 5px 0 0 1px; }
.dash-inputs i { height: 21px; background: #595959; }
.dash-labels { display: grid; grid-template-columns: repeat(6, 34px); column-gap: 5px; margin: 2px 0 0 1px; text-align: center; font-size: 11px; }

/* Separations */
.chk-row { display: flex; align-items: center; }
.cb { width: 12px; height: 12px; flex: none; border: 1px solid #c8c8c8; border-radius: 2px; }
.dimcb { border-color: #6e6e6e; }
.dimt { color: #707070; }
.overprint { margin: 7px 0 0 6px; height: 12px; }
.plates { margin: 7px 4px 0 5px; height: 249px; border: 1px solid #4a4a4a; border-radius: 2px; }
.plate { display: flex; align-items: center; height: 21px; border-bottom: 1px solid #4a4a4a; font-size: 10.500px; color: #6e6e6e; }
.pl-eye { width: 22px; height: 20px; border-right: 1px solid #4a4a4a; display: flex; align-items: center; justify-content: center; color: #8a8a8a; flex: none; }
.pl-eye svg { width: 14px; height: 10px; }
.pl-sw { width: 12px; height: 12px; margin-left: 4px; border: 1px solid #3a3a3a; flex: none; }
.pl-name { margin-left: 3px; }
.cmyk { background: conic-gradient(#e6007e 0 25%, #ffed00 25% 50%, #111 50% 75%, #009fe3 75%); }
.cyan { background: #00a0e9; }
.mag { background: #e4007f; }
.yel { background: #fff100; }
.blk { background: #000; }
.spot { margin: 5px 0 0 6px; height: 12px; }

/* Transparency */
.tr-top { display: flex; align-items: center; margin: 6px 0 0 5px; }
.f-blend { width: 101px; background: transparent; border-color: #4a4a4a; align-items: center; padding-right: 6px; }
.f-blend .in { font-size: 11px; padding-left: 6px; }
.tr-op { margin-left: 7px; width: 46px; font-size: 11px; color: #a9a9a9; white-space: nowrap; }
.f-trop { width: 70px; }
.sep-tr { margin: 7px 4px 6px 5px; }
.tr-mid { display: flex; margin-left: 5px; height: 57px; margin-top: -2px; }
.thumbs { width: 135px; height: 55px; margin-top: 2px; flex: none; background: #4c4c4c; border-radius: 2px; display: flex; align-items: center; padding-left: 3px; }
.thumb { position: relative; width: 50px; height: 50px; background: #fff; border: 1px solid #000; flex: none; }
.th-y { position: absolute; left: 1px; top: 1px; width: 31px; height: 31px; background: #f5ea25; }
.th-r { position: absolute; left: 17px; top: 17px; width: 31px; height: 30px; background: #eb1a22; }
.maskbox { width: 50px; height: 50px; margin-left: 29px; border: 1px solid #8c8c8c; display: flex; align-items: center; justify-content: center; flex: none; }
.noic { width: 26px; height: 26px; }
.tr-side { margin-left: 4px; width: 96px; }
.mask-btn { height: 20px; border: 1px solid #6e6e6e; border-radius: 3px; text-align: center; font-size: 11px; line-height: 18px; color: #e2e2e2; margin-top: -1px; }
.clip { margin: 6px 0 0 1px; }
.inv { margin: 8px 0 0 1px; }
.sep-tr2 { margin: 7px 4px 7px 5px; }
.blend-row { margin-left: 6px; }
.blend-row .cb-minus { margin-left: 7px; background: #b4b4b4; }
.ko-row { margin: 8px 0 0 6px; }

/* Floating panels */
.float { position: absolute; background: #535353; border: 1px solid #3a3a3a; z-index: 2; }
.f-path { left: 1096px; top: 80px; width: 231px; height: 143px; border-top: 3px solid #3a3a3a; }
.tabs-float { height: 26px; }
.float-over { position: absolute; left: 189px; top: 3px; color: #c4c4c4; font: 700 11px/16px "Liberation Sans", sans-serif; }
.float-bar { position: absolute; left: 205px; top: 5px; width: 1px; height: 11px; background: #c4c4c4; }
.pm-path { right: 5px; top: 6px; }
.pf-label { font-size: 10.500px; color: #c8c8c8; margin-left: 5px; line-height: 14px; }
.pf-l1 { margin-top: 7px; }
.pf-row { display: flex; align-items: center; margin: 10px 0 0 10px; height: 19px; gap: 23px; }
.pf { width: 14px; height: 14px; color: #c6c6c6; }
.pf-expand { width: 71px; height: 19px; margin-left: -6px; background: #5a5a5a; color: #707070; text-align: center; font-size: 11px; line-height: 19px; }
.pf-l2 { margin-top: 11px; }
.pf-row2 { display: flex; margin: 12px 0 0 13px; gap: 23px; }

.f-char { left: 1087px; top: 274px; width: 231px; height: 336px; }
.fc-head { height: 14px; background: #3e3e3e; display: flex; align-items: center; justify-content: flex-end; gap: 12px; padding-right: 5px; color: #bdbdbd; }
.fc-x { width: 8px; height: 8px; }
.tabs-char { height: 26px; }
.pm-char { top: 8px; right: 6px; }
.char-body { padding: 7px 5px 0 4px; }
.f-font { width: 220px; height: 20px; align-items: center; }
.f-font .ch { align-self: stretch; }
.f-fontstyle { width: 220px; margin-top: 6px; }
.lens { width: 18px; height: 13px; margin-left: 1px; color: #bdbdbd; }
.font-name { font-size: 11px; padding-left: 7px; line-height: 18px; }
.font-style { font-size: 10.500px; padding-left: 6px; }
.char-row { display: grid; grid-template-columns: 22px 80px 37px 81px; height: 20px; margin-bottom: 6px; align-items: center; }
.char-row .fld { width: 100%; }
.char-row:last-child { grid-template-columns: 102px 37px 81px; margin: 0; }
.char-row + .psep { margin: 0 0 5px; }
.tt-row + .psep { margin: 5px 0; }
.fld-sel { background: #434343; align-items: center; padding-right: 5px; }
.fld-sel .in { font-size: 10.500px; padding-left: 4px; }
.lang { width: 100%; }
.ci { position: relative; height: 20px; color: #bcbcbc; font-family: "Liberation Serif", serif; display: flex; align-items: center; white-space: nowrap; }
.ci-r { padding-left: 16px; }
.ci-col { flex-direction: column; justify-content: center; align-items: center; gap: 1px; line-height: 1; }
.ci-col.ci-r { padding-left: 16px; }
.ci-col-l { padding-right: 2px; }
.a-v { width: 6px; height: 16px; margin-right: 2px; }
.a-h { width: 16px; height: 5px; }
.a-l { width: 10px; height: 5px; }
.a-pair { display: flex; gap: 1px; }
.gl-b { font-size: 20px; line-height: 20px; }
.gl-s { font-size: 11px; padding-top: 5px; }
.gl-lead { font: 10px/9px "Liberation Sans", sans-serif; text-decoration: underline; }
.gl-hs { font-size: 18px; line-height: 13px; }
.gl-va { font: 700 11px/11px "Liberation Sans", sans-serif; letter-spacing: -1px; }
.gl-vab { font: 700 11px/11px "Liberation Sans", sans-serif; letter-spacing: -1px; background: #bcbcbc; color: #535353; padding: 0 2px 0 1px; }
.gl-kana { font: 10px/11px "Noto Sans CJK JP", sans-serif; border: 1px dotted #9a9a9a; border-width: 0 1px 0 1px; padding: 0 1px; }
.gl-a { font: 13px "Liberation Sans", sans-serif; border-bottom: 1px solid #bcbcbc; }
.gl-aa { font: 9px "Liberation Sans", sans-serif; margin-left: 1px; }
.gl-rot { font-size: 13px; width: 16px; height: 16px; line-height: 14px; text-align: center; border: 1.500px solid #bcbcbc; border-radius: 50%; }
.tt-row { display: flex; height: 13px; font: 700 15px/13px "Liberation Serif", serif; color: #bcbcbc; }
.tt { width: 26px; text-align: center; flex: none; white-space: nowrap; }
.tt small { font-size: 11px; }
.tt sup, .tt sub { font-size: 8px; line-height: 0; }
.t2 { margin-left: 4px; }
.t3 { margin-left: 27px; }
.t4 { margin-left: 3px; }
.t5 { margin-left: 28px; text-decoration: underline; }
.t6 { margin-left: 3px; text-decoration: line-through; }
.aa { font: 10px "Liberation Sans", sans-serif; color: #bcbcbc; padding-left: 18px; }
.aa b { font-size: 10px; font-weight: 700; padding-top: 4px; }
.aa small { font-size: 10px; padding-bottom: 4px; margin-right: 1px; }

/* Context menu */
.ctx { position: absolute; left: 515px; top: 552px; width: 303px; height: 348px; z-index: 3; background: #f0f0f0; border: 1px solid #a8a8a8; box-shadow: 3px 3px 3px rgba(0,0,0,.5); padding: 0 2px; font-size: 13px; color: #111; }
.mi { height: 22px; padding-left: 33px; line-height: 22px; position: relative; white-space: nowrap; }
.ms { height: 7px; position: relative; margin: 0 0 0 0; }
.ms::after { content: ""; position: absolute; left: 1px; right: 0; top: 3px; height: 1px; background: #cfcfcf; }
.off { color: #8a8a8a; }
.hot { background: #91c9f7; }
.mar { position: absolute; right: 9px; top: 6px; width: 5px; height: 9px; color: #555; }
.off .mar { color: #aaa; }
```
